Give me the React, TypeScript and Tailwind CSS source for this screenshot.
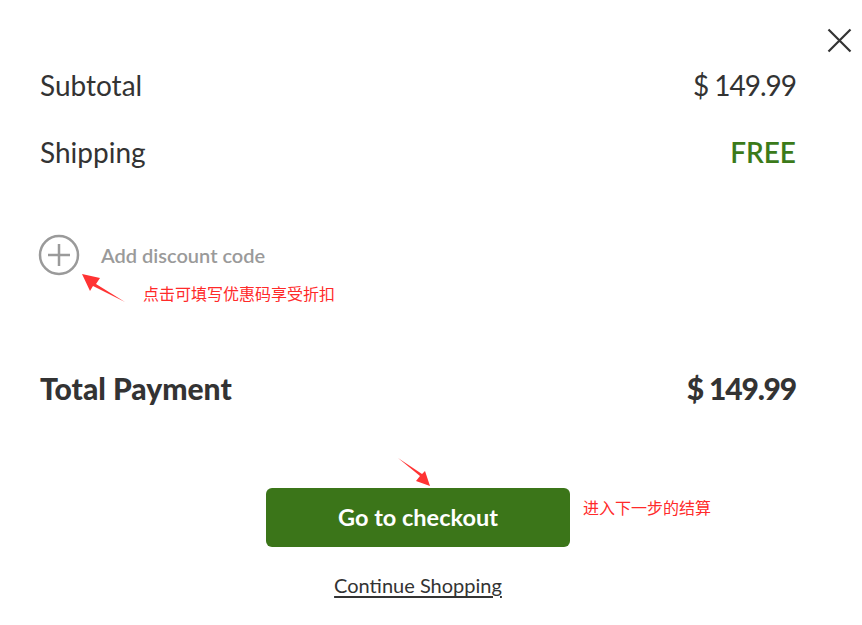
import React from "react";

export default function App() {
  const font = { fontFamily: "Lato, 'Noto Sans', sans-serif" };
  return (
    <div className="relative w-[862px] h-[625px] bg-white text-[#333333] overflow-hidden" style={font}>
      {/* close */}
      <button className="absolute left-[827px] top-[28px] w-[25px] h-[25px]">
        <svg width="25" height="25" viewBox="0 0 25 25">
          <path d="M1.5 1.5 L23.5 23.5 M23.5 1.5 L1.5 23.5" stroke="#333" strokeWidth="2.2" fill="none" />
        </svg>
      </button>

      <div className="pl-[40px] pr-[66px] pt-[68px] flex flex-col">
        <div className="flex justify-between items-center h-[34px] text-[28px]">
          <span>Subtotal</span>
          <span className="flex items-center tracking-[-1px]">
            <span>$</span>
            <span className="ml-[6px]">149.99</span>
          </span>
        </div>
        <div className="flex justify-between items-center h-[34px] mt-[33px] text-[28px]">
          <span>Shipping</span>
          <span className="text-[#3b7a1a] font-semibold">FREE</span>
        </div>

        <div className="flex items-center mt-[66px] h-[40px]">
          <svg width="42" height="42" viewBox="0 0 42 42" className="-ml-[2px]">
            <circle cx="21" cy="21" r="19" stroke="#9a9a9a" strokeWidth="2.5" fill="none" />
            <path d="M21 10 V32 M10 21 H32" stroke="#9a9a9a" strokeWidth="2.5" />
          </svg>
          <span className="ml-[21px] text-[20px] font-semibold text-[#9a9a9a]">Add discount code</span>
        </div>

        <div className="flex justify-between items-center h-[36px] mt-[95px] text-[30px] font-black">
          <span>Total Payment</span>
          <span className="flex items-center tracking-[-1.2px]">
            <span>$</span>
            <span className="ml-[6px]">149.99</span>
          </span>
        </div>

        <div className="flex justify-center mt-[82px]">
          <button className="w-[304px] h-[59px] rounded-[6px] bg-[#3b7519] text-white text-[23.5px] font-bold">
            Go to checkout
          </button>
        </div>
        <div className="flex justify-center mt-[24px]">
          <span className="text-[20px] leading-[28px] underline underline-offset-[3px]">Continue Shopping</span>
        </div>
      </div>

      {/* annotations */}
      <svg className="absolute left-0 top-0 pointer-events-none" width="862" height="625">
        <path d="M125 302 L96 284 L100 278 L82 274 L90 291 L93 286 Z" fill="#ff3333" />
        <path d="M398 458 L420 476 L416 481 L430 486 L425 471 L422 474 Z" fill="#ff3333" />
      </svg>
      <span
        className="absolute left-[143px] top-[282px] text-[16px] text-[#ff2a2a] leading-[22px]"
        style={{ fontFamily: "'Noto Sans CJK SC', sans-serif" }}
      >
        点击可填写优惠码享受折扣
      </span>
      <span
        className="absolute left-[583px] top-[496px] text-[16px] text-[#ff2a2a] leading-[22px]"
        style={{ fontFamily: "'Noto Sans CJK SC', sans-serif" }}
      >
        进入下一步的结算
      </span>
    </div>
  );
}
